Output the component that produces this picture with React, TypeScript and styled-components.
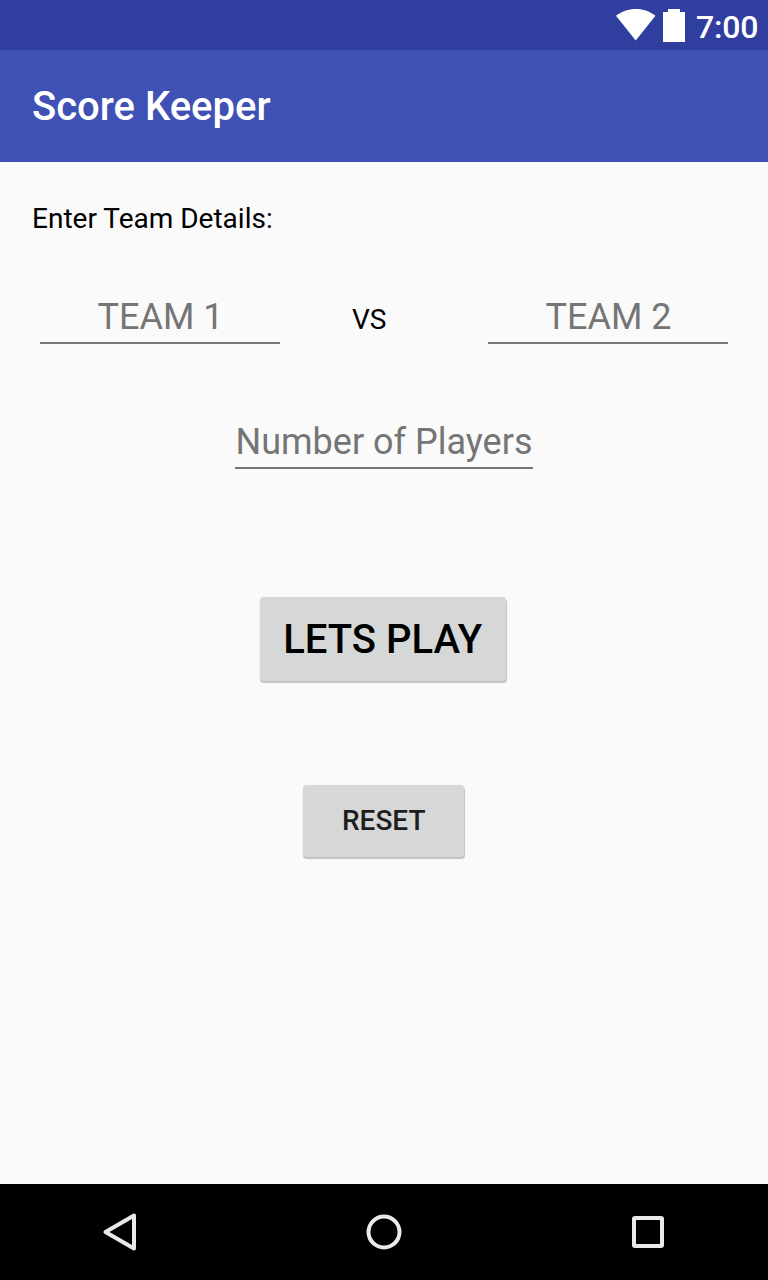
import React from "react";
import styled, { createGlobalStyle } from "styled-components";

const GlobalStyle = createGlobalStyle`
  body { margin: 0; background: #fafafa; }
  * { box-sizing: border-box; }
`;

const Screen = styled.div`
  width: 768px;
  height: 1280px;
  display: flex;
  flex-direction: column;
  background: #fafafa;
  color: #000;
  font-family: Roboto, sans-serif;
`;

const StatusBar = styled.header`
  height: 50px;
  flex: none;
  display: flex;
  justify-content: flex-end;
  align-items: flex-start;
  padding: 9px 0 0;
  background: #303f9f;

  svg { display: block; flex: none; }
`;

const StatusIcons = styled.div`
  display: flex;
  gap: 7px;
`;

const Clock = styled.span`
  width: 72px;
  margin: -1px 0 0 11px;
  color: #fff;
  font: 500 32px/38px Roboto, sans-serif;
  letter-spacing: -0.2px;
`;

const AppBar = styled.div`
  height: 112px;
  flex: none;
  display: flex;
  align-items: center;
  padding: 2px 32px 0;
  background: #3f51b5;
`;

const Title = styled.h1`
  margin: 0;
  color: #fff;
  font-size: 40px;
  font-weight: 500;
  line-height: 48px;
`;

const Content = styled.main`
  flex: 1;
  display: flex;
  flex-direction: column;
  align-items: center;
  padding: 41px 40px 0;
`;

const Heading = styled.p`
  align-self: stretch;
  margin: 0 0 61px -8px;
  font-size: 28px;
  line-height: 32px;
`;

const TeamRow = styled.div`
  align-self: stretch;
  display: grid;
  grid-template-columns: 240px 1fr 240px;
  height: 48px;
  margin-bottom: 77px;
`;

const Versus = styled.span`
  padding: 8px 0 0 72px;
  font-size: 28px;
  line-height: 32px;
`;

const Field = styled.input<{ $width: number; $inset?: number }>`
  width: ${(p) => p.$width}px;
  height: 48px;
  padding: 0 0 4px ${(p) => p.$inset ?? 0}px;
  border: 0;
  border-bottom: 2px solid #757575;
  border-radius: 0;
  outline: 0;
  background: transparent;
  color: #000;
  font: 400 36px/42px Roboto, sans-serif;
  text-align: center;

  &::placeholder { color: #757575; opacity: 1; }
`;

const Button = styled.button<{ $large?: boolean }>`
  width: ${(p) => (p.$large ? 246 : 161)}px;
  height: ${(p) => (p.$large ? 84 : 72)}px;
  margin: ${(p) => (p.$large ? 128 : 104)}px ${(p) => (p.$large ? 1.5 : 0.5)}px 0 0;
  padding: ${(p) => (p.$large ? "0 1px 0 0" : "0 0 2px 0")};
  border: 0;
  border-radius: 4px;
  background: #d6d8d7;
  box-shadow: 0.5px 2px 1px #c0c1c1, 0 0 1px #dcdddd;
  color: ${(p) => (p.$large ? "#000" : "#1d1e1e")};
  font: 500 ${(p) => (p.$large ? 40 : 28)}px Roboto, sans-serif;
  white-space: nowrap;
`;

const NavBar = styled.nav`
  height: 96px;
  flex: none;
  display: flex;
  justify-content: space-between;
  align-items: center;
  padding: 0 96px;
  background: #000;

  svg { display: block; fill: none; stroke: #e9eae9; stroke-width: 4; stroke-linejoin: round; }
`;

export default function App() {
  return (
    <Screen>
      <GlobalStyle />
      <StatusBar>
        <StatusIcons>
          <svg width="40" height="32" viewBox="0 0 40 32">
            <path d="M0 6.8C5.5 2.4 12.3 0 20 0s14 2.4 19.500 6.8L19.700 31.500z" fill="#fff" />
          </svg>
          <svg width="22" height="33" viewBox="0 0 22 33">
            <path d="M5 0h12v3h5v30H0V3h5z" fill="#fff" />
          </svg>
        </StatusIcons>
        <Clock>7:00</Clock>
      </StatusBar>
      <AppBar>
        <Title>Score Keeper</Title>
      </AppBar>
      <Content>
        <Heading>Enter Team Details:</Heading>
        <TeamRow>
          <Field $width={240} $inset={1} placeholder="TEAM 1" />
          <Versus>VS</Versus>
          <Field $width={240} $inset={1} placeholder="TEAM 2" />
        </TeamRow>
        <Field $width={298} placeholder="Number of Players" />
        <Button $large>LETS PLAY</Button>
        <Button>RESET</Button>
      </Content>
      <NavBar>
        <svg width="48" height="48" viewBox="0 0 48 48">
          <path d="M38 7.5v33L9.500 24z" />
        </svg>
        <svg width="48" height="48" viewBox="0 0 48 48">
          <circle cx="24" cy="24" r="15.500" />
        </svg>
        <svg width="48" height="48" viewBox="0 0 48 48">
          <rect x="10" y="10" width="28" height="28" rx="1" />
        </svg>
      </NavBar>
    </Screen>
  );
}
